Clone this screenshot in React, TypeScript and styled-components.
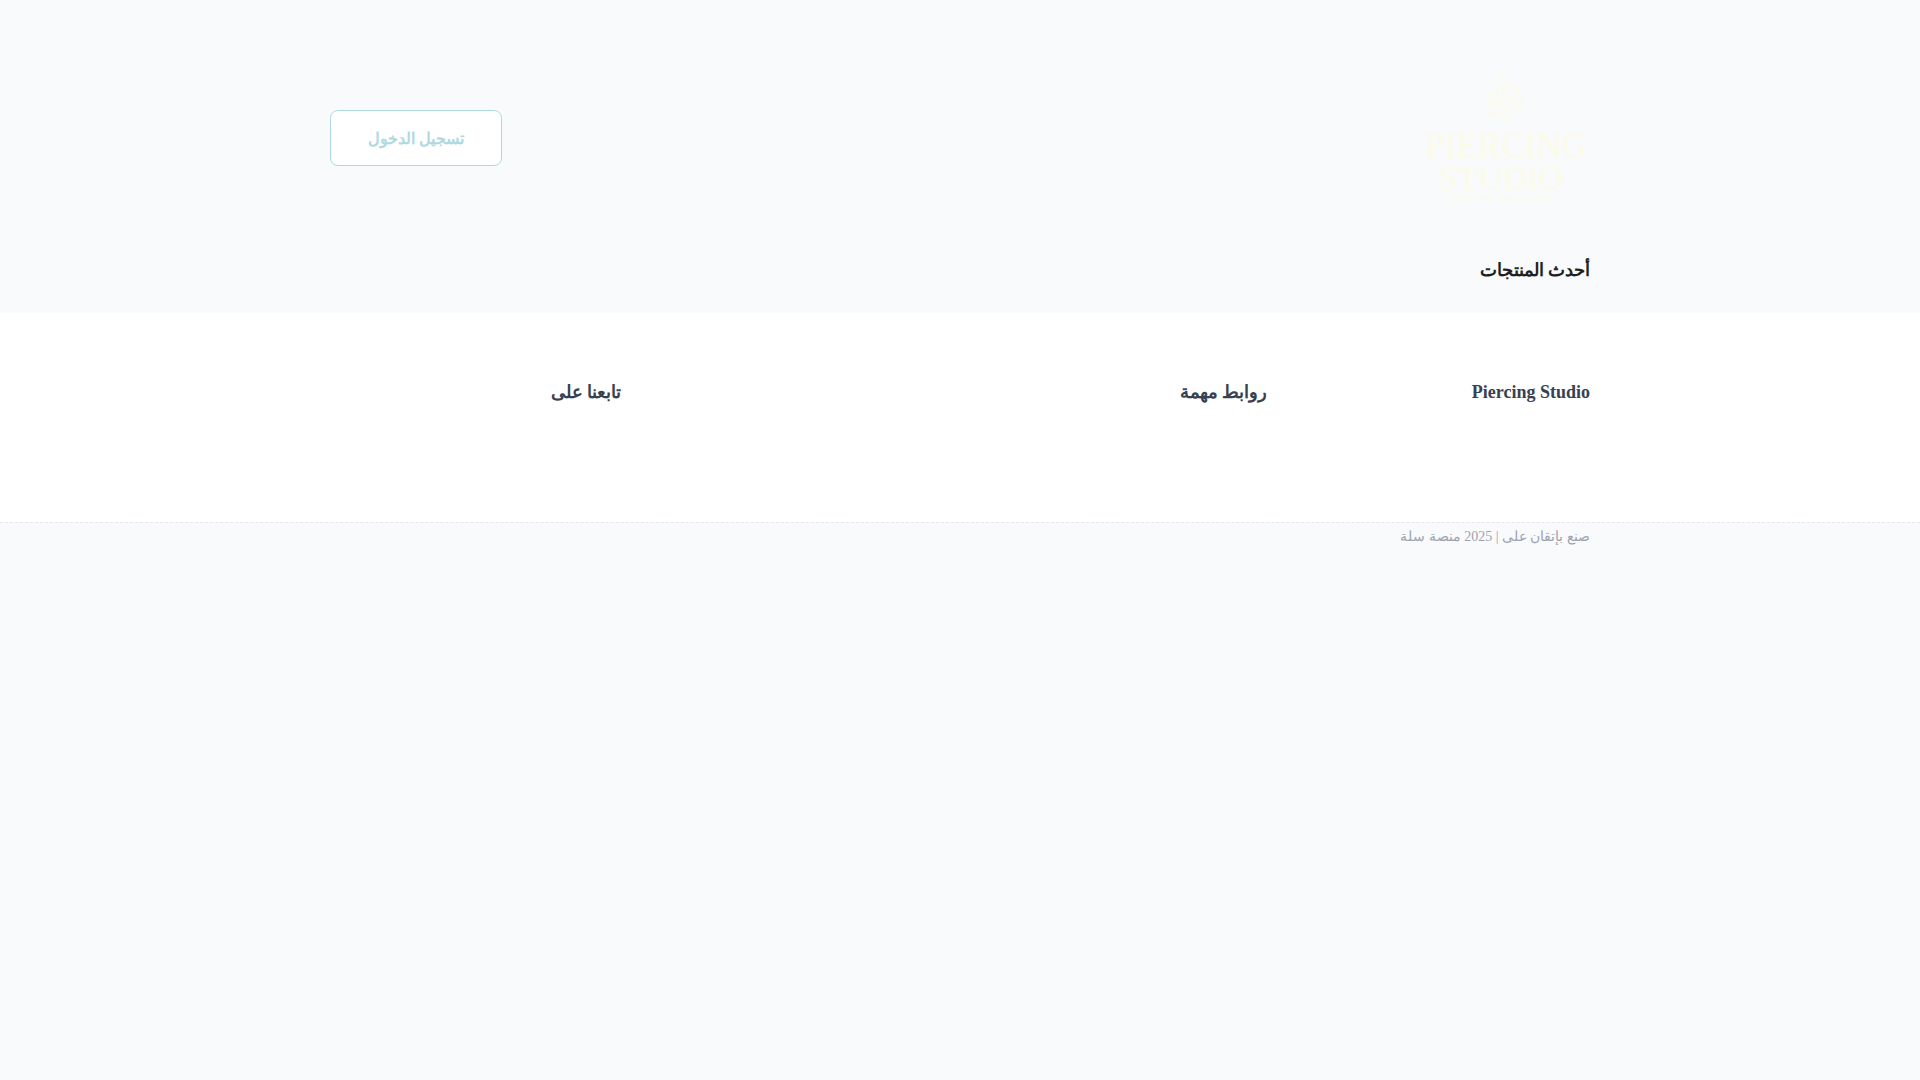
import React from 'react';
import styled, { createGlobalStyle } from 'styled-components';

const GlobalStyle = createGlobalStyle`
  *, *::before, *::after { box-sizing: border-box; }
  body {
    margin: 0;
    background: #f9fafc;
    color: #231f1e;
    font-family: "Liberation Serif", serif;
    font-size: 16px;
    line-height: 24px;
  }
  h1, h2, h3, p { margin: 0; }
`;

const Container = styled.div`
  width: 100%;
  max-width: 1280px;
  margin: 0 auto;
  padding: 0 10px;
`;

const Header = styled.header`
  padding: 48px 0 24px;
`;

const HeaderRow = styled(Container)`
  display: flex;
  align-items: center;
  justify-content: space-between;
`;

const LogoLink = styled.a`
  display: block;
  color: #fcfbe6;
`;

const LogoArt = styled.svg`
  display: block;
  width: 168px;
  height: 180px;
  font-family: "Liberation Serif", serif;
`;

const Tagline = styled.text`
  font-family: "DejaVu Sans", sans-serif;
  font-size: 9px;
  opacity: 0.7;
`;

const LoginButton = styled.button`
  padding: 16px 37px 14px;
  border: 1px solid #aed9e0;
  border-radius: 8px;
  background: #fff;
  color: #aed9e0;
  font: bold 16px/24px "Liberation Serif", serif;
  cursor: pointer;
`;

const SectionTitle = styled.h2`
  padding-top: 2px;
  padding-bottom: 27px;
  font-size: 18px;
  line-height: 32px;
`;

const Footer = styled.footer`
  background: #fff;
`;

const FooterGrid = styled(Container)`
  display: grid;
  grid-template-columns: repeat(4, 1fr);
  gap: 32px;
  padding-top: 63px;
  padding-bottom: 114px;
`;

const FooterColumn = styled.section<{ $span?: number }>`
  grid-column: span ${({ $span }) => $span ?? 1};
`;

const FooterTitle = styled.h3`
  color: #374151;
  font-size: 18px;
  line-height: 32px;
`;

const Copyright = styled.div`
  border-top: 1px dashed #e5e7eb;
  background: #f9fafc;
  color: #9ca3af;
  font-size: 14px;
  line-height: 28px;
`;

function Logo() {
  return (
    <LogoArt viewBox="0 0 168 180" role="img" aria-label="Piercing Studio">
      <g fill="none" stroke="currentColor" strokeWidth="1.2" strokeLinejoin="round">
        <circle cx="83" cy="29" r="4.5" />
        <path d="M83 34v4M79 38h8" />
        <path d="M77 39.5Q83 36.500 89 39.500Q95 43 98 48Q101 54 98 60Q95 65 89 69Q83 73 77 69Q71 65 68 60Q65 54 68 48Q71 43 77 39.500Z" />
        <path d="M83 46L91 54L83 62L75 54Z" />
        <path d="M79 38Q80 43 83 46Q86 43 87 38M79 70Q80 65 83 62Q86 65 87 70M67 50Q72 51 75 54Q72 57 67 58M99 50Q94 51 91 54Q94 57 99 58" />
        <path d="M79 50L71 44M87 50L95 44M79 58L71 65M87 58L95 65" strokeWidth="0.6" />
      </g>
      <path fill="currentColor" d="M96 36l1 3 3 1-3 1-1 3-1-3-3-1 3-1zM70 64l1 2 3 1-3 1-1 3-1-3-3-1 3-1z" />
      <g fill="currentColor" textAnchor="middle" direction="ltr">
        <text x="84" y="109" fontSize="35">PIERCING</text>
        <text x="79" y="141" fontSize="34">STUDIO</text>
        <Tagline x="79" y="153">shine with every detail</Tagline>
      </g>
    </LogoArt>
  );
}

export default function App() {
  return (
    <div dir="rtl" lang="ar">
      <GlobalStyle />
      <Header>
        <HeaderRow>
          <LogoLink href="#"><Logo /></LogoLink>
          <LoginButton type="button">تسجيل الدخول</LoginButton>
        </HeaderRow>
      </Header>
      <main>
        <Container>
          <SectionTitle>أحدث المنتجات</SectionTitle>
        </Container>
      </main>
      <Footer>
        <FooterGrid>
          <FooterColumn><FooterTitle>Piercing Studio</FooterTitle></FooterColumn>
          <FooterColumn $span={2}><FooterTitle>روابط مهمة</FooterTitle></FooterColumn>
          <FooterColumn><FooterTitle>تابعنا على</FooterTitle></FooterColumn>
        </FooterGrid>
        <Copyright>
          <Container><p>صنع بإتقان على | 2025 منصة سلة</p></Container>
        </Copyright>
      </Footer>
    </div>
  );
}
